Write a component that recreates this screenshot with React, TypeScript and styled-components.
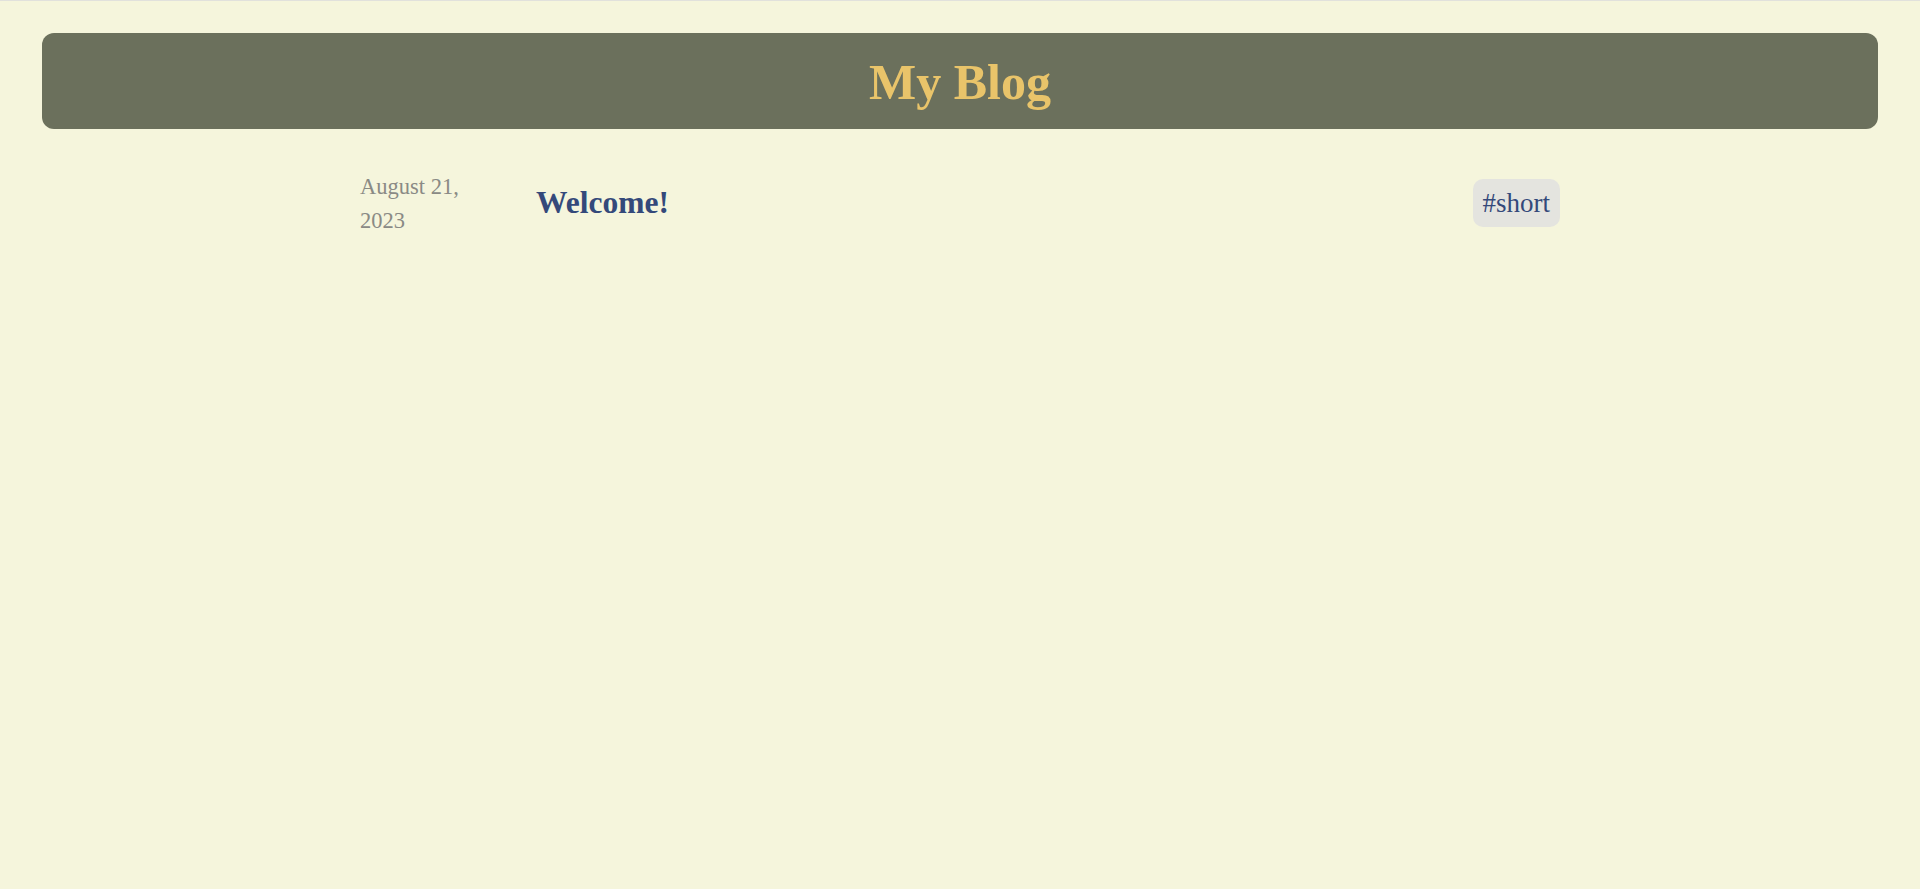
import React from "react";
import styled, { createGlobalStyle } from "styled-components";

const GlobalStyle = createGlobalStyle`
  html, body {
    margin: 0;
    padding: 0;
    background: #f5f5dc;
  }
  body {
    border-top: 1px solid #e1e1dc;
    font-family: "Liberation Serif", "Times New Roman", serif;
  }
`;

const Page = styled.div`
  padding: 32px 42px;
  min-height: 100vh;
  box-sizing: border-box;
`;

const Header = styled.header`
  height: 96px;
  background: #6b705c;
  border-radius: 12px;
  display: flex;
  align-items: center;
  justify-content: center;
`;

const Title = styled.h1`
  margin: 0;
  color: #e9c46a;
  font-family: "Liberation Serif", serif;
  font-weight: 700;
  font-size: 50px;
  line-height: 1;
  transform: translateY(1px);
`;

const PostList = styled.main`
  width: 1200px;
  margin: 39px auto 0;
  display: flex;
  flex-direction: column;
`;

const PostRow = styled.article`
  display: grid;
  grid-template-columns: 160px 1fr auto;
  column-gap: 16px;
  align-items: center;
`;

const PostDate = styled.time`
  color: #8a8a85;
  font-size: 22.5px;
  line-height: 34px;
  padding-top: 2px;
`;

const PostTitle = styled.a`
  color: #34497a;
  font-weight: 700;
  font-size: 31.5px;
  text-decoration: none;
`;

const Tag = styled.span`
  display: inline-flex;
  align-items: center;
  height: 48px;
  padding: 0 10px;
  box-sizing: border-box;
  background: #e4e4df;
  border-radius: 10px;
  color: #34497a;
  font-size: 27px;
`;

export default function App() {
  return (
    <>
      <GlobalStyle />
      <Page>
        <Header>
          <Title>My Blog</Title>
        </Header>
        <PostList>
          <PostRow>
            <PostDate>
              August 21,
              <br />
              2023
            </PostDate>
            <PostTitle href="#">Welcome!</PostTitle>
            <Tag>#short</Tag>
          </PostRow>
        </PostList>
      </Page>
    </>
  );
}
